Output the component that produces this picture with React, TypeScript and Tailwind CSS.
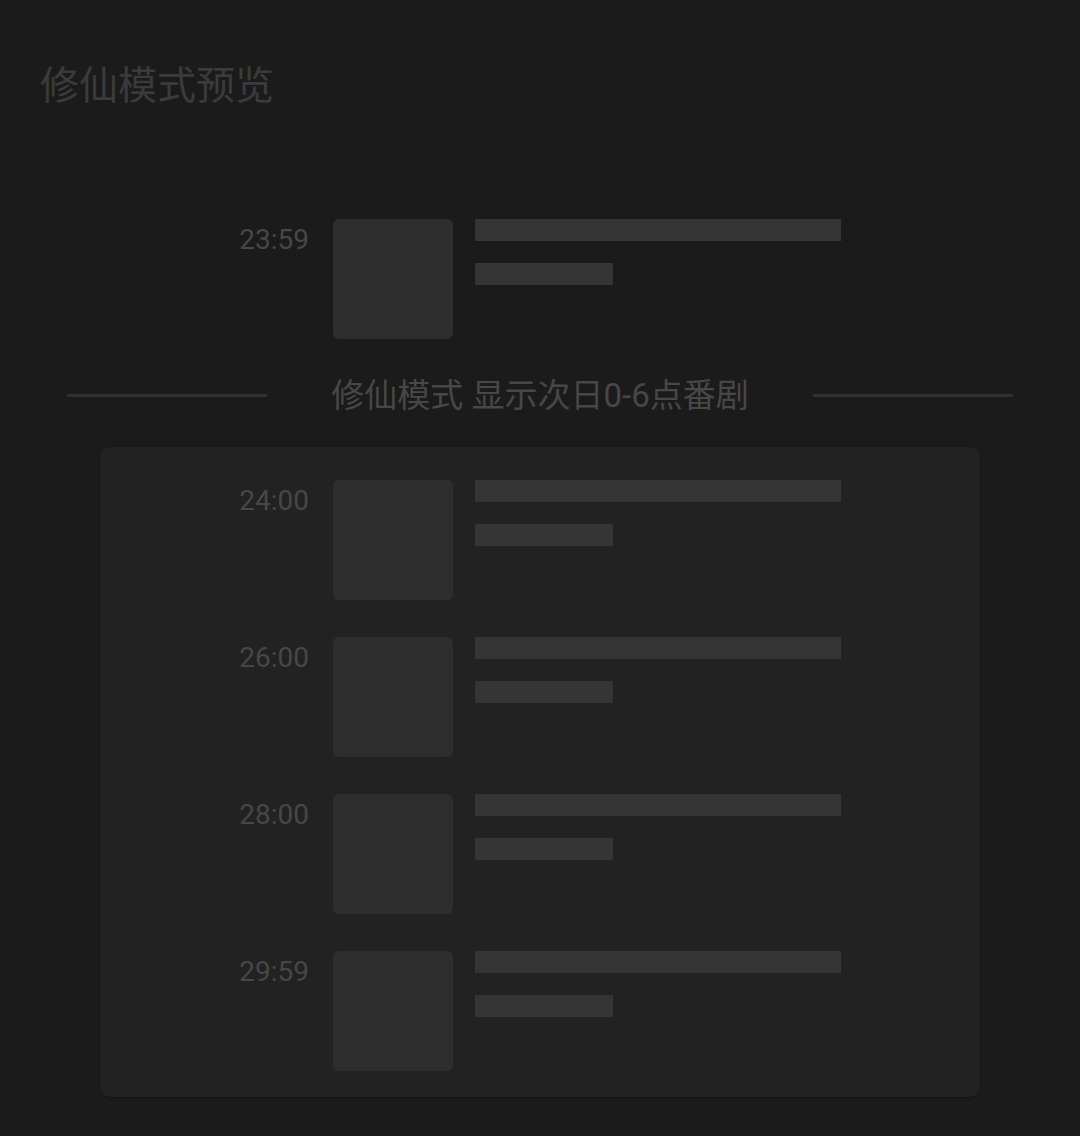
const FONT = "font-['Roboto','Noto_Sans_CJK_SC',sans-serif]";

function Row({ time }: { time: string }) {
  return (
    <div className="flex items-start">
      <div className="w-[209px] pt-[7px] text-right text-[28px] leading-none text-[#474747]">{time}</div>
      <div className="ml-[24px] h-[120px] w-[120px] rounded-[6px] bg-[#2e2e2e]" />
      <div className="ml-[22px] flex flex-col gap-[22px]">
        <div className="h-[22px] w-[366px] bg-[#353535]" />
        <div className="h-[22px] w-[138px] bg-[#353535]" />
      </div>
    </div>
  );
}

export default function App() {
  return (
    <div className={`min-h-[1136px] w-[1080px] bg-[#1b1b1b] ${FONT}`}>
      <h1 className="px-10 pt-[63px] text-[39px] leading-none text-[#3b3b3b] font-['Noto_Sans_CJK_SC',sans-serif]">
        修仙模式预览
      </h1>

      {/* 当日最后一条 */}
      <div className="mt-[117px] px-[100px]">
        <Row time="23:59" />
      </div>

      {/* 分隔 */}
      <div className="mt-[40px] flex items-center justify-center gap-[64px] px-[67px]">
        <div className="h-[3px] flex-1 bg-[#303030]" />
        <span className="text-[33px] leading-none text-[#474747]">修仙模式 显示次日0-6点番剧</span>
        <div className="h-[3px] flex-1 bg-[#303030]" />
      </div>

      {/* 次日 0-6 点 */}
      <div className="mx-[100px] mt-[35px] flex flex-col gap-[37px] rounded-[10px] bg-[#222222] pt-[33px] pb-[26px] shadow-[0_1px_3px_rgba(0,0,0,0.3)]">
        <Row time="24:00" />
        <Row time="26:00" />
        <Row time="28:00" />
        <Row time="29:59" />
      </div>
    </div>
  );
}
